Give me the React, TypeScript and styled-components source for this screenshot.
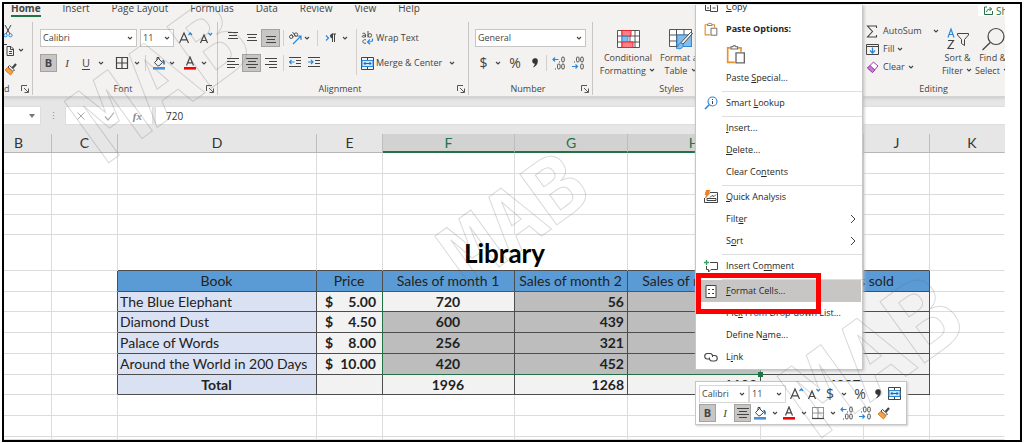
import React from "react";
import styled, { createGlobalStyle, css } from "styled-components";

const UI = `"Open Sans", "Noto Sans", sans-serif`;
const SHEET = `Lato, "Open Sans", sans-serif`;
const GREEN = "#217346";
const INK = "#444";
const BLUE = "#2b88d8";

const Global = createGlobalStyle`
  *, *::before, *::after { box-sizing: border-box; }
  body { margin: 0; background: #fff; }
  button, select, input { font: inherit; color: inherit; margin: 0; padding: 0; border: 0; background: none; }
`;

/* ---------- frame ---------- */

const Frame = styled.div`
  position: relative;
  margin: 2px;
  padding: 1px 15px 0 0;
  border: 2px solid #000;
  overflow: hidden;
  background: #fff;
  color: ${INK};
  font: 9px/12px ${UI};
`;

const Workbook = styled.main`
  overflow: hidden;
  background: #e6e6e6;
`;

/* ---------- ribbon ---------- */

const Ribbon = styled.header`
  background: #f3f2f1;
  border-bottom: 1px solid #d6d4d2;
  box-shadow: 0 1px 3px #c4c4c4;
  position: relative;
`;

const TabBar = styled.nav`
  display: flex;
  align-items: flex-end;
  gap: 22px;
  height: 12px;
  padding-left: 7px;
  overflow: hidden;
  font-size: 10px;
`;

const Tab = styled.a<{ $active?: boolean }>`
  flex: none;
  line-height: 14px;
  color: ${INK};
  text-decoration: none;
  font-weight: ${(p) => (p.$active ? 700 : 400)};
  border-bottom: 2px solid ${(p) => (p.$active ? GREEN : "transparent")};
`;

const Share = styled.button`
  flex: none;
  display: flex;
  align-items: center;
  align-self: flex-start;
  gap: 3px;
  width: 27px;
  height: 11px;
  padding-left: 6px;
  margin-left: auto;
  overflow: hidden;
  background: #fff;
  color: ${GREEN};
  line-height: 10px;

  > svg { flex: none; }
`;

const Groups = styled.div`
  display: flex;
  height: 79px;
  padding-top: 5px;
  overflow: hidden;
`;

const Group = styled.section<{ $w: number; $pad?: number; $last?: boolean }>`
  flex: none;
  display: flex;
  flex-direction: column;
  width: ${(p) => p.$w}px;
  padding-left: ${(p) => p.$pad ?? 0}px;
  margin-left: ${(p) => (p.$last ? "auto" : 0)};
  height: 73px;
  border-right: 1px solid ${(p) => (p.$last ? "transparent" : "#c8c6c4")};
`;

const GroupBody = styled.div<{ $top?: number }>`
  display: flex;
  height: 60px;
  padding-top: ${(p) => p.$top ?? 7}px;
`;

const GroupFoot = styled.div`
  display: flex;
  align-items: center;
  height: 13px;
  padding-right: 3px;
  white-space: nowrap;
`;

const GroupName = styled.span<{ $start?: boolean }>`
  flex: 1;
  text-align: ${(p) => (p.$start ? "left" : "center")};
`;

const Stack = styled.div<{ $tight?: boolean }>`
  display: flex;
  flex-direction: column;
  gap: ${(p) => (p.$tight ? 0 : 7)}px;
`;

const Row = styled.div<{ $h?: number }>`
  display: flex;
  align-items: center;
  height: ${(p) => p.$h ?? 18}px;
`;

const Tool = styled.button<{ $w?: number; $on?: boolean }>`
  flex: none;
  display: flex;
  align-items: center;
  justify-content: center;
  width: ${(p) => p.$w ?? 19}px;
  height: 18px;
  ${(p) =>
    p.$on &&
    css`
      background: #c8c6c4;
      outline: 1px solid #a5a3a1;
      outline-offset: -1px;
    `}
`;

const Letter = styled.span<{ $k?: "b" | "i" | "u" | "big" }>`
  font-size: ${(p) => (p.$k === "big" ? 14 : 11)}px;
  line-height: 16px;
  ${(p) => p.$k === "b" && "font-weight: 700;"}
  ${(p) => p.$k === "i" && `font-style: italic; font-family: "Liberation Serif", serif;`}
  ${(p) => p.$k === "u" && "text-decoration: underline; text-underline-offset: 2px;"}
`;

const Rule = styled.span<{ $m?: number; $tall?: boolean }>`
  flex: none;
  width: 1px;
  height: ${(p) => (p.$tall ? 46 : 16)}px;
  margin: 0 ${(p) => p.$m ?? 3}px;
  background: #d2d0ce;
`;

const TextTool = styled.button`
  display: flex;
  align-items: center;
  gap: 2px;
  height: 18px;
  white-space: nowrap;
`;

const Push = styled.span<{ $w: number }>`
  flex: none;
  width: ${(p) => p.$w}px;
`;

const BigTool = styled.button<{ $w: number }>`
  flex: none;
  display: flex;
  flex-direction: column;
  align-items: center;
  width: ${(p) => p.$w}px;
  padding-top: 4px;
  line-height: 13px;
  white-space: nowrap;
`;

const BigIcon = styled.span`
  flex: none;
  display: flex;
  align-items: center;
  height: 25px;
`;

const SelectWrap = styled.span<{ $w: number; $plain?: boolean }>`
  flex: none;
  display: grid;
  align-items: center;
  width: ${(p) => p.$w}px;
  height: 18px;
  border: 1px solid ${(p) => (p.$plain ? "#d8d8d8" : "#c8c6c4")};
  background: #fff;

  > * { grid-area: 1 / 1; }
  > svg { justify-self: end; margin-right: 2px; pointer-events: none; }
  > select { appearance: none; width: 100%; padding-left: 2px; outline: 0; }
`;

/* ---------- formula bar ---------- */

const FormulaBar = styled.div`
  display: flex;
  align-items: center;
  height: 19px;
  margin: 9px 0;
  color: #8a8a8a;
`;

const NameBox = styled.div`
  display: flex;
  align-items: center;
  justify-content: flex-end;
  width: 37px;
  height: 19px;
  padding-right: 5px;
  background: #fff;
  border: 1px solid #dedede;
  border-left: 0;
`;

const Dots = styled.span`
  width: 24px;
  text-align: center;
  line-height: 19px;
`;

const FormulaTools = styled.div`
  display: flex;
  align-items: center;
  justify-content: space-between;
  width: 88px;
  height: 19px;
  padding: 0 10px;
  background: #fff;
  border: 1px solid #dedede;
`;

const FormulaInput = styled.input`
  flex: 1;
  min-width: 0;
  height: 19px;
  margin-left: 2px;
  padding-left: 10px;
  background: #fff;
  border: 1px solid #dedede;
  border-right: 0;
  color: #333;
  font: 10px ${UI};
`;

/* ---------- sheet ---------- */

const Sheet = styled.table`
  width: 100%;
  table-layout: fixed;
  border-collapse: separate;
  border-spacing: 0;
  background: #fff;
  color: #222;
  font: 14px/16px ${SHEET};
`;

const ColHead = styled.th<{ $sel?: boolean }>`
  height: 19px;
  padding: 0;
  font-weight: 400;
  color: ${(p) => (p.$sel ? GREEN : "#333")};
  background: ${(p) => (p.$sel ? "#d2d2d2" : "#e6e6e6")};
  border-right: 1px solid #bdbdbd;
  border-bottom: ${(p) => (p.$sel ? `2px solid ${GREEN}` : "1px solid #b5b5b5")};
  &:first-child { padding-right: 18px; }
  &:last-child { padding-left: 10px; border-right-color: transparent; }
`;

const SheetRow = styled.tr<{ $h?: number }>`
  height: ${(p) => p.$h ?? 21}px;
  ${(p) => !p.$h && "&:nth-child(4n + 3) { height: 20px; }"}
`;

type CellProps = {
  $fill?: string;
  $align?: "left" | "center" | "right";
  $bold?: boolean;
  $right?: string;
  $bottom?: string;
};

const LINE = "#4d4d4d";
const GRID = "#dcdcdc";

const Cell = styled.td<CellProps>`
  position: relative;
  padding: 0 3px 0 2px;
  white-space: nowrap;
  text-align: ${(p) => p.$align ?? "left"};
  font-weight: ${(p) => (p.$bold ? 700 : 400)};
  background: ${(p) => p.$fill ?? "transparent"};
  border-right: 1px solid ${(p) => p.$right ?? GRID};
  border-bottom: 1px solid ${(p) => p.$bottom ?? GRID};
  &:last-child { border-right-color: transparent; }
`;

const Title = styled(Cell)`
  font-size: 26px;
  line-height: 30px;
  color: #000;
`;

const Money = styled.span`
  display: flex;
  justify-content: space-between;
  padding: 0 3px 0 6px;
`;

const Handle = styled.i`
  position: absolute;
  right: -3px;
  bottom: -3px;
  width: 5px;
  height: 5px;
  background: ${GREEN};
  z-index: 1;
`;

/* ---------- overlays ---------- */

const Menu = styled.ul`
  position: absolute;
  left: 691px;
  top: 1px;
  width: 168px;
  margin: 0;
  padding: 0 0 1px;
  list-style: none;
  background: #fff;
  border: 1px solid #c6c6c6;
  border-top: 0;
  box-shadow: 1px 1px 3px #bbb;
  overflow: hidden;
`;

const MenuItem = styled.button<{ $on?: boolean; $short?: boolean; $bold?: boolean }>`
  display: grid;
  grid-template-columns: 22px 1fr 16px;
  align-items: center;
  column-gap: 4px;
  width: calc(100% - 2px);
  height: 22px;
  margin: ${(p) => (p.$short ? "-9px" : 0)} 1px 0;
  padding-left: 3px;
  text-align: left;
  color: #262626;
  font-weight: ${(p) => (p.$bold ? 700 : 400)};
  background: ${(p) => (p.$on ? "#c8c6c4" : "transparent")};

  > svg { justify-self: center; }
`;

const Label = styled.span`
  white-space: nowrap;
`;

const PasteRow = styled.button`
  display: flex;
  align-items: center;
  height: 27px;
  padding-left: 30px;
`;

const MenuRule = styled.li`
  height: 3px;
  margin-left: 26px;
  border-bottom: 1px solid #dedede;
`;

const RedBox = styled.div`
  position: absolute;
  left: 692px;
  top: 269px;
  width: 125px;
  height: 41px;
  border: 5px solid #f00;
`;

const MiniBar = styled.div`
  position: absolute;
  left: 691px;
  top: 377px;
  width: 212px;
  padding: 2px 3px;
  background: #fff;
  border: 1px solid #c6c6c6;
  box-shadow: 1px 1px 2px #ccc;
`;

const Watermark = styled.div<{ $x: number; $y: number; $size: number }>`
  position: absolute;
  left: ${(p) => p.$x}px;
  top: ${(p) => p.$y}px;
  transform: translate(-50%, -50%) rotate(-36deg);
  font: 700 ${(p) => p.$size}px/1 "DejaVu Sans Mono", monospace;
  color: transparent;
  -webkit-text-stroke: 1px rgba(110, 110, 110, 0.26);
  pointer-events: none;
`;

/* ---------- icons ---------- */

const Svg = ({ w, h = w, children }: { w: number; h?: number; children: React.ReactNode }) => (
  <svg width={w} height={h} viewBox={`0 0 ${w} ${h}`} fill="none" stroke={INK} aria-hidden="true">
    {children}
  </svg>
);

const Chevron = () => (
  <Svg w={8}>
    <path d="M2 3l2 2 2-2" strokeWidth="1.1" />
  </Svg>
);

const Lines = ({ rows }: { rows: [number, number, number][] }) => (
  <Svg w={12} h={14}>
    {rows.map(([x, y, l]) => (
      <path key={y} d={`M${x} ${y}.5h${l}`} />
    ))}
  </Svg>
);
const top3: [number, number, number][] = [[1, 1, 10], [2, 4, 8], [1, 7, 10]];
const mid3: [number, number, number][] = [[1, 3, 10], [2, 6, 8], [1, 9, 10]];
const bot3: [number, number, number][] = [[1, 5, 10], [2, 8, 8], [1, 11, 10]];
const left4: [number, number, number][] = [[0, 2, 12], [0, 5, 8], [0, 8, 12], [0, 11, 8]];
const ctr4: [number, number, number][] = [[0, 2, 12], [2, 5, 8], [0, 8, 12], [2, 11, 8]];
const right4: [number, number, number][] = [[0, 2, 12], [4, 5, 8], [0, 8, 12], [4, 11, 8]];

const Launcher = () => (
  <Svg w={8}>
    <path d="M.5 6V.5H6M3 3l4 4M7.500 3.500v4h-4" strokeWidth=".9" />
  </Svg>
);

const Grow = ({ down }: { down?: boolean }) => (
  <Svg w={14} h={14}>
    <path d={down ? "M1.500 12L5 4l3.500 8M2.800 9.500h4.400" : "M.5 12L5 2l4.500 10M2.200 8.800h5.600"} strokeWidth="1.200" />
    <path d={down ? "M9.500 2l1.800 2L13 2" : "M9.500 4l1.800-2L13 4"} stroke={BLUE} strokeWidth="1.200" />
  </Svg>
);

const Borders = ({ dotted }: { dotted?: boolean }) => (
  <Svg w={14} h={14}>
    {dotted ? (
      <>
        <path d="M1 1.500h12M1.500 1v12M12.500 1v12M7 1v12M1 7h12" strokeWidth=".9" stroke="#888" />
        <path d="M1 12.500h12" strokeWidth="1.200" />
      </>
    ) : (
      <path d="M1 1.500h12M1 12.500h12M1.500 1v12M12.500 1v12M7 1v12M1 7h12" strokeWidth="1.200" />
    )}
  </Svg>
);

const Bucket = () => (
  <Svg w={14} h={14}>
    <path d="M2.500 6.500l4-4 4 4-3.500 3.300H5.500zM5 4V1.500h2V3" />
    <path d="M10.500 4.500c1.500.5 1.800 2 1.500 4" stroke="#1e5fa0" strokeWidth="1.400" />
    <path d="M1 12.300h12" stroke="#4a90d9" strokeWidth="2.600" />
  </Svg>
);

const FontColor = () => (
  <Svg w={14} h={14}>
    <path d="M3.500 9.500L7 1l3.500 8.500M4.700 6.800h4.600" strokeWidth="1.200" />
    <path d="M1 12.300h12" stroke="#f00" strokeWidth="2.600" />
  </Svg>
);

const Orient = () => (
  <Svg w={14} h={14}>
    <g strokeWidth=".9">
      <circle cx="3.200" cy="5.800" r="1.700" />
      <path d="M3.500 3.200l2 3" />
      <path d="M4.500 1l3.600 4.600" />
      <circle cx="8" cy="3.600" r="1.700" />
    </g>
    <path d="M5 13l7.500-7.500M9 5h4v4" stroke={BLUE} strokeWidth="1.200" />
  </Svg>
);

const Pilcrow = () => (
  <Svg w={12} h={12}>
    <path d="M1 3.500l2.500 2.500L1 8.500" stroke={BLUE} strokeWidth="1.200" />
    <path d="M7.500 10V2M9.500 10V2M11 2H7" />
    <path d="M7.500 2a2 2 0 000 4z" fill={INK} />
  </Svg>
);

const Wrap = () => (
  <Svg w={13} h={14}>
    <g strokeWidth=".9">
      <path d="M1.500 2.500c2-.8 3 0 3 1.200v2.500M4.500 4.200c-4-.2-4 2.200-2 2 1 0 2-.5 2-1.500" />
      <path d="M7 0v6.300" />
      <circle cx="8.800" cy="4.400" r="1.800" />
      <path d="M5 8.800c-4-1-4.500 4.200 0 3.500" />
    </g>
    <path d="M11.500 7.500c.5 3-1 3.500-4.500 3.500M9 8.500L6.500 11 9 13.300" stroke={BLUE} strokeWidth="1.200" />
  </Svg>
);

const Merge = () => (
  <Svg w={13} h={13}>
    <path d="M.5.5h12v12H.5z" />
    <path d="M6.500.5v3M6.500 9.500v3" />
    <path d="M1 3.500h11v6H1z" fill="#cfe6fa" stroke={BLUE} />
    <path d="M3 6.500h7M4.500 5L3 6.500 4.500 8M8.500 5L10 6.500 8.500 8" stroke="#0f6cbd" />
  </Svg>
);

const Indent = ({ more }: { more?: boolean }) => (
  <Svg w={12} h={12}>
    <path d="M0 .5h12M7 3.500h5M7 6.500h5M0 9.500h12" />
    <path d={more ? "M0 5h5M3 3l2 2-2 2" : "M.5 5h5M2.500 3l-2 2 2 2"} stroke={BLUE} strokeWidth="1.200" />
  </Svg>
);

const Oval = ({ x, y }: { x: number; y: number }) => (
  <rect x={x} y={y} width="2.600" height="5" rx="1.300" strokeWidth=".9" />
);
const Decimal = ({ less }: { less?: boolean }) => (
  <Svg w={14} h={14}>
    {less ? (
      <>
        <path d="M3 6h1" />
        <Oval x={5.5} y={1} />
        <Oval x={9.7} y={1} />
        <Oval x={9.7} y={8} />
        <path d="M1 10.500h5.500M4.500 8.500l2 2-2 2" stroke={BLUE} strokeWidth="1.200" />
      </>
    ) : (
      <>
        <path d="M7 6h1" />
        <Oval x={9.7} y={1} />
        <Oval x={5.5} y={8} />
        <Oval x={9.7} y={8} />
        <path d="M3 13h1" />
        <path d="M1 3.500h5.500M3 1.500l-2 2 2 2" stroke={BLUE} strokeWidth="1.200" />
      </>
    )}
  </Svg>
);

const Comma = () => (
  <Svg w={8} h={12}>
    <path d="M4 1.500a2.300 2.300 0 012.500 2.500c0 3-1.500 5-4 6 1-1.200 1.600-2.200 1.500-3.500A2.500 2.500 0 014 1.500z" fill="#333" stroke="#333" strokeWidth=".6" />
  </Svg>
);

const CondFormat = () => (
  <Svg w={23} h={20}>
    <path d="M.5 1.500h22v17H.5zM5 1v18M18 1v18M.5 7h22M.5 13h22M13 1v18" strokeWidth=".9" fill="#fff" />
    <path d="M5 1.500h9V7H5zM5 13h11v5.500H5z" fill="#ff8087" stroke="#e8262f" />
    <path d="M5 7.500h6v5H5z" fill="#83bdec" stroke="#2b88d8" strokeWidth=".8" />
  </Svg>
);

const FormatTable = () => (
  <Svg w={24} h={22}>
    <path d="M.5 1.500h22v17H.5zM7.500 1v18M15 1v18M.5 7h22M.5 13h22" strokeWidth=".9" fill="#fff" />
    <path d="M8 7h14.500v11.500H8z" fill="#83bdec" stroke={BLUE} />
    <path d="M23.500 5.500L14 16l-2-1.500L21.500 4.500z" fill="#fff" />
    <path d="M12 15c-3 0-2 4-5 5 4 2 8 0 7-4z" fill="#83bdec" stroke={BLUE} />
  </Svg>
);

const Sigma = () => (
  <Svg w={12} h={13}>
    <path d="M10.500 3V1H1.500l5 5.500-5 5.500h9v-2" strokeWidth="1.100" />
  </Svg>
);

const FillDown = () => (
  <Svg w={13} h={13}>
    <path d="M.5 1.500h12v10H.5zM.5 3.500h12" />
    <path d="M6.500 4.500V10M4 7.500L6.500 10 9 7.500" stroke={BLUE} strokeWidth="1.300" />
  </Svg>
);

const Eraser = () => (
  <Svg w={13} h={13}>
    <path d="M7.500 1l4.500 4-5.500 6.500L1.500 7z" stroke="#a23bb0" fill="#fff" />
    <path d="M4 4.500l5 4.500-2.500 2.500L1.500 7z" fill="#c77dd1" stroke="#a23bb0" />
  </Svg>
);

const SortFilter = () => (
  <Svg w={24} h={24}>
    <path d="M2 10.500L5 2l3 8.500M3 7.500h4" stroke={BLUE} strokeWidth="1.200" />
    <path d="M2 13.500h5.500L2 21.500h6" strokeWidth="1.200" />
    <path d="M11.500 6.500h11v1.500l-4 4.500v6l-3-2v-4l-4-4.500z" />
  </Svg>
);

const Lens = () => (
  <Svg w={24} h={24}>
    <circle cx="15" cy="9.500" r="8" strokeWidth="1.200" />
    <path d="M9.200 15.500L1.500 23" strokeWidth="1.300" />
  </Svg>
);

const Brush = () => (
  <Svg w={13} h={14}>
    <path d="M12 2L8.500 6" strokeWidth="2.200" />
    <path d="M5.500 3.500l5 4.500-1.500 1.500-5-4.500z" fill="#fff" />
    <path d="M3.500 5.500L9 10l-2.500 3L1 8z" fill="#f5a04c" stroke="#e07f1c" />
  </Svg>
);

const Scissors = () => (
  <Svg w={10} h={14}>
    <path d="M1 1l5 9M7 1L2 10" />
    <circle cx="1.500" cy="11.300" r="1.600" stroke={BLUE} />
    <circle cx="6.500" cy="11.300" r="1.600" stroke={BLUE} />
  </Svg>
);

const Pages = () => (
  <Svg w={10} h={14}>
    <path d="M0 1.500h3M3 3.500h4l2.500 2.500v6.500H3zM6.500 4v2.500H9M5 8.500h3M5 10.500h3" />
  </Svg>
);

const CopyIcon = () => (
  <Svg w={13} h={12}>
    <path d="M.5.5h5v9h-5zM5.500 2.500h4l3 2v6h-7zM2 7h2M7.500 7h3" />
  </Svg>
);

const Clip = ({ size }: { size: number }) => (
  <svg width={size} height={size} viewBox="0 0 18 18" fill="none" stroke="#e8912d" strokeWidth="1.500" aria-hidden="true">
    <path d="M8 16.500H1.500v-13H4M11 3.500h2.500V7" />
    <path d="M4.500 4.500v-2H6a1.600 1.600 0 013 0h1.500v2z" stroke="#666" strokeWidth="1" />
    <path d="M9 8h7.500v9H9z" stroke="#666" strokeWidth="1.200" fill="#fff" />
  </svg>
);

const Lookup = () => (
  <Svg w={14} h={14}>
    <circle cx="8.500" cy="5.500" r="4.500" stroke={BLUE} strokeWidth="1.100" />
    <path d="M5 9l-4 4" stroke={BLUE} strokeWidth="1.600" />
    <path d="M8.500 5v3M8.500 3v1" />
  </Svg>
);

const Quick = () => (
  <Svg w={14} h={14}>
    <path d="M6 2.500h7.500v10h-13V8M3 10.500h9V8.500H3z" />
    <path d="M6 7.500l2-2 2 1 2-2" />
    <path d="M2.500 0h3.500L4.500 3H6L1.500 8l1-3.500H1z" fill="#f08020" stroke="#e06c10" strokeWidth=".6" />
  </Svg>
);

const CommentIcon = () => (
  <Svg w={14} h={13}>
    <path d="M6 2.500h7.500v7H7L4.500 12V9.500h-2V6" />
    <path d="M2.500 0v5M0 2.500h5" stroke="#36a05c" strokeWidth="1.300" />
  </Svg>
);

const FormatIcon = () => (
  <Svg w={12} h={13}>
    <path d="M1 .5h10v12H1z" fill="#fff" />
    <path d="M3 4.500h2M7 4.500h2M3 8.500h2M7 8.500h2" />
  </Svg>
);

const LinkIcon = () => (
  <Svg w={14} h={10}>
    <path d="M6 7H3.500a2.700 2.700 0 010-5.500H6A2.700 2.700 0 018.500 5" strokeWidth="1.100" />
    <path d="M8 3.500h2.500a2.700 2.700 0 010 5.500H8A2.700 2.700 0 015.500 5.500" strokeWidth="1.100" />
  </Svg>
);

const Arrow = () => (
  <Svg w={8} h={10}>
    <path d="M2 1l4 4-4 4" />
  </Svg>
);

const Drop = ({ name, w = 8 }: { name: string; w?: number }) => (
  <Tool $w={w} aria-label={`${name} options`}>
    <Chevron />
  </Tool>
);

const Picker = ({ label, value, w, plain }: { label: string; value: string; w: number; plain?: boolean }) => (
  <SelectWrap $w={w} $plain={plain}>
    <select aria-label={label} defaultValue={value}>
      <option>{value}</option>
    </select>
    <Chevron />
  </SelectWrap>
);

const Foot = ({ children, launcher = true, start }: { children: React.ReactNode; launcher?: boolean; start?: boolean }) => (
  <GroupFoot>
    <GroupName $start={start}>{children}</GroupName>
    {launcher && <Launcher />}
  </GroupFoot>
);

/* ---------- menu ---------- */

type Entry = { label: string; key?: number; icon?: React.ReactNode; on?: boolean; sub?: boolean; bold?: boolean; short?: boolean };
const MENU: (Entry | "rule" | "paste")[] = [
  { label: "Copy", key: 0, icon: <CopyIcon />, short: true },
  { label: "Paste Options:", icon: <Clip size={14} />, bold: true },
  "paste",
  { label: "Paste Special...", key: 6 },
  "rule",
  { label: "Smart Lookup", key: 6, icon: <Lookup /> },
  "rule",
  { label: "Insert...", key: 0 },
  { label: "Delete...", key: 0 },
  { label: "Clear Contents", key: 8 },
  "rule",
  { label: "Quick Analysis", key: 0, icon: <Quick /> },
  { label: "Filter", key: 4, sub: true },
  { label: "Sort", key: 1, sub: true },
  "rule",
  { label: "Insert Comment", key: 9, icon: <CommentIcon /> },
  "rule",
  { label: "Format Cells...", key: 0, icon: <FormatIcon />, on: true },
  { label: "Pick From Drop-down List...", key: 3 },
  { label: "Define Name...", key: 8 },
  { label: "Link", key: 1, icon: <LinkIcon /> },
];

const Keyed = ({ label, at }: { label: string; at?: number }) =>
  at === undefined ? (
    <Label>{label}</Label>
  ) : (
    <Label>
      {label.slice(0, at)}
      <u>{label[at]}</u>
      {label.slice(at + 1)}
    </Label>
  );

const ContextMenu = () => (
  <Menu>
    {MENU.map((m, i) =>
      m === "rule" ? (
        <MenuRule key={i} role="separator" />
      ) : m === "paste" ? (
        <li key={i}>
          <PasteRow aria-label="Paste">
            <Clip size={20} />
          </PasteRow>
        </li>
      ) : (
        <li key={i}>
          <MenuItem $on={m.on} $short={m.short} $bold={m.bold}>
            {m.icon ?? <i />}
            <Keyed label={m.label} at={m.key} />
            {m.sub && <Arrow />}
          </MenuItem>
        </li>
      )
    )}
  </Menu>
);

const MiniToolbar = () => (
  <MiniBar role="toolbar" aria-label="Formatting">
    <Row $h={19}>
      <Picker label="Mini font" value="Calibri" w={50} plain />
      <Picker label="Mini font size" value="11" w={37} plain />
      <Push $w={2} />
      <Tool $w={17} aria-label="Increase font size"><Grow /></Tool>
      <Tool $w={17} aria-label="Decrease font size"><Grow down /></Tool>
      <Tool $w={16} aria-label="Currency"><Letter $k="big">$</Letter></Tool>
      <Drop name="Currency" w={12} />
      <Tool $w={20} aria-label="Percent"><Letter $k="big">%</Letter></Tool>
      <Tool $w={16} aria-label="Comma style"><Comma /></Tool>
      <Tool $w={16} aria-label="Merge"><Merge /></Tool>
    </Row>
    <Row $h={19}>
      <Tool $w={17} $on aria-label="Bold"><Letter $k="b">B</Letter></Tool>
      <Tool $w={18} aria-label="Italic"><Letter $k="i">I</Letter></Tool>
      <Tool $w={17} $on aria-label="Center"><Lines rows={ctr4} /></Tool>
      <Tool $w={18} aria-label="Fill color"><Bucket /></Tool>
      <Drop name="Fill" w={11} />
      <Tool $w={18} aria-label="Font color"><FontColor /></Tool>
      <Drop name="Color" w={11} />
      <Tool $w={18} aria-label="Borders"><Borders dotted /></Tool>
      <Drop name="Borders" w={11} />
      <Tool $w={18} aria-label="Increase decimal"><Decimal /></Tool>
      <Tool $w={18} aria-label="Decrease decimal"><Decimal less /></Tool>
      <Tool $w={18} aria-label="Format painter"><Brush /></Tool>
    </Row>
  </MiniBar>
);

/* ---------- sheet data ---------- */

const COLS: [string, number | undefined][] = [
  ["B", 48], ["C", 66], ["D", 199], ["E", 66], ["F", 132], ["G", 113], ["H", 133], ["I", 103], ["J", 66], ["K", undefined],
];
const BOOKS = [
  { name: "The Blue Elephant", price: "5.00", m1: 720, m2: 56 },
  { name: "Diamond Dust", price: "4.50", m1: 600, m2: 439 },
  { name: "Palace of Words", price: "8.00", m1: 256, m2: 321 },
  { name: "Around the World in 200 Days", price: "10.00", m1: 420, m2: 452 },
];
const HEAD = "#5b9bd5";
const NAME = "#d9e1f2";
const SOFT = "#f2f2f2";
const PICKED = "#bdbdbd";

const Blank = ({ n }: { n: number }) => (
  <>
    {Array.from({ length: n }, (_, i) => (
      <Cell key={i} />
    ))}
  </>
);

const SheetTable = () => (
  <Sheet>
    <colgroup>
      {COLS.map(([c, w]) => (
        <col key={c} width={w} />
      ))}
    </colgroup>
    <thead>
      <tr>
        {COLS.map(([c]) => (
          <ColHead key={c} scope="col" $sel={"FGH".includes(c)}>{c}</ColHead>
        ))}
      </tr>
    </thead>
    <tbody>
      <SheetRow><Blank n={10} /></SheetRow>
      <SheetRow><Blank n={10} /></SheetRow>
      <SheetRow><Blank n={10} /></SheetRow>
      <SheetRow $h={20}><Blank n={10} /></SheetRow>
      <SheetRow $h={36}>
        <Blank n={2} />
        <Cell $bottom={LINE} />
        <Cell $bottom={LINE} />
        <Title colSpan={2} $align="center" $bold $bottom={LINE}>Library</Title>
        <Cell $bottom={LINE} />
        <Cell $bottom={LINE} />
        <Cell $bottom={LINE} />
        <Cell />
      </SheetRow>
      <SheetRow>
        <Cell />
        <Cell $right={LINE} />
        <Cell $fill={HEAD} $align="center" $right={LINE} $bottom={LINE}>Book</Cell>
        <Cell $fill={HEAD} $align="center" $right={LINE} $bottom={LINE}>Price</Cell>
        <Cell $fill={HEAD} $align="center" $right={LINE} $bottom={GREEN}>Sales of month 1</Cell>
        <Cell $fill={HEAD} $align="center" $right={LINE} $bottom={GREEN}>Sales of month 2</Cell>
        <Cell $fill={HEAD} $align="center" $right={LINE} $bottom={GREEN}>Sales of month 3</Cell>
        <Cell colSpan={2} $fill={HEAD} $align="center" $right={LINE} $bottom={LINE}>Total books sold</Cell>
        <Cell />
      </SheetRow>
      {BOOKS.map((b, i) => {
        const last = i === BOOKS.length - 1;
        const edge = last ? GREEN : LINE;
        return (
          <SheetRow key={b.name}>
            <Cell />
            <Cell $right={LINE} />
            <Cell $fill={NAME} $right={LINE} $bottom={LINE}>{b.name}</Cell>
            <Cell $fill={SOFT} $bold $right={GREEN} $bottom={LINE}>
              <Money><span>$</span><span>{b.price}</span></Money>
            </Cell>
            <Cell $fill={i ? PICKED : SOFT} $bold $align="center" $right={LINE} $bottom={edge}>{b.m1}</Cell>
            <Cell $fill={PICKED} $bold $align="right" $right={LINE} $bottom={edge}>{b.m2}</Cell>
            <Cell $fill={PICKED} $right={GREEN} $bottom={edge}>{last && <Handle />}</Cell>
            <Cell colSpan={2} $fill={SOFT} $right={LINE} $bottom={LINE} />
            <Cell />
          </SheetRow>
        );
      })}
      <SheetRow>
        <Cell />
        <Cell $right={LINE} />
        <Cell $fill={NAME} $bold $align="center" $right={LINE} $bottom={LINE}>Total</Cell>
        <Cell $fill={SOFT} $right={LINE} $bottom={LINE} />
        <Cell $fill={SOFT} $bold $align="center" $right={LINE} $bottom={LINE}>1996</Cell>
        <Cell $fill={SOFT} $bold $align="right" $right={LINE} $bottom={LINE}>1268</Cell>
        <Cell $fill={SOFT} $bold $align="right" $right={LINE} $bottom={LINE}>1133</Cell>
        <Cell colSpan={2} $fill={SOFT} $bold $align="center" $right={LINE} $bottom={LINE}>4397</Cell>
        <Cell />
      </SheetRow>
      <SheetRow><Blank n={10} /></SheetRow>
      <SheetRow><Blank n={10} /></SheetRow>
      <SheetRow $h={3}><Blank n={10} /></SheetRow>
    </tbody>
  </Sheet>
);

const TABS = ["Home", "Insert", "Page Layout", "Formulas", "Data", "Review", "View", "Help"];

export default function App() {
  return (
    <Frame>
      <Global />
      <Workbook>
        <Ribbon>
          <TabBar>
            {TABS.map((t, i) => (
              <Tab key={t} href="#" $active={i === 0}>{t}</Tab>
            ))}
            <Share>
              <svg width="9" height="9" viewBox="0 0 9 9" fill="none" stroke={GREEN} aria-hidden="true">
                <path d="M3 1H.5v7.500h8V5M2.500 6c.5-2.500 2-3 5-3M5.500 1l2 2-2 2" />
              </svg>
              Share
            </Share>
          </TabBar>
          <Groups>
            <Group $w={29}>
              <GroupBody $top={0}>
                <Stack $tight>
                  <Row><Scissors /></Row>
                  <Row $h={20}><Pages /><Drop name="Copy" w={14} /></Row>
                  <Row><Brush /></Row>
                </Stack>
              </GroupBody>
              <Foot start>d</Foot>
            </Group>

            <Group $w={185} $pad={7}>
              <GroupBody>
                <Stack>
                  <Row>
                    <Picker label="Font" value="Calibri" w={97} />
                    <Push $w={3} />
                    <Picker label="Font size" value="11" w={34} />
                    <Push $w={2} />
                    <Tool $w={20} aria-label="Increase font size"><Grow /></Tool>
                    <Tool $w={20} aria-label="Decrease font size"><Grow down /></Tool>
                  </Row>
                  <Row>
                    <Tool $w={17} $on aria-label="Bold"><Letter $k="b">B</Letter></Tool>
                    <Tool $w={20} aria-label="Italic"><Letter $k="i">I</Letter></Tool>
                    <Tool $w={18} aria-label="Underline"><Letter $k="u">U</Letter></Tool>
                    <Drop name="Underline" w={12} />
                    <Push $w={4} />
                    <Tool $w={22} aria-label="Borders"><Borders /></Tool>
                    <Drop name="Borders" />
                    <Rule $m={4} />
                    <Tool $w={18} aria-label="Fill color"><Bucket /></Tool>
                    <Drop name="Fill" />
                    <Push $w={4} />
                    <Tool $w={20} aria-label="Font color"><FontColor /></Tool>
                    <Drop name="Color" />
                  </Row>
                </Stack>
              </GroupBody>
              <Foot>Font</Foot>
            </Group>

            <Group $w={251} $pad={5}>
              <GroupBody>
                <Stack>
                  <Row>
                    <Tool aria-label="Top align"><Lines rows={top3} /></Tool>
                    <Tool aria-label="Middle align"><Lines rows={mid3} /></Tool>
                    <Tool $on aria-label="Bottom align"><Lines rows={bot3} /></Tool>
                    <Rule />
                    <Tool $w={16} aria-label="Orientation"><Orient /></Tool>
                    <Drop name="Orientation" />
                    <Rule $m={6} />
                    <Tool $w={14} aria-label="Text direction"><Pilcrow /></Tool>
                    <Drop name="Direction" w={14} />
                  </Row>
                  <Row>
                    <Tool aria-label="Align left"><Lines rows={left4} /></Tool>
                    <Tool $on aria-label="Center"><Lines rows={ctr4} /></Tool>
                    <Tool aria-label="Align right"><Lines rows={right4} /></Tool>
                    <Rule />
                    <Tool $w={16} aria-label="Decrease indent"><Indent /></Tool>
                    <Tool $w={22} aria-label="Increase indent"><Indent more /></Tool>
                  </Row>
                </Stack>
                <Rule $tall $m={4} />
                <Stack>
                  <TextTool><Wrap />Wrap Text</TextTool>
                  <TextTool><Merge />Merge &amp; Center<Push $w={2} /><Chevron /></TextTool>
                </Stack>
              </GroupBody>
              <Foot>Alignment</Foot>
            </Group>

            <Group $w={124} $pad={6}>
              <GroupBody>
                <Stack>
                  <Row><Picker label="Number format" value="General" w={111} /></Row>
                  <Row>
                    <Tool $w={17} aria-label="Currency"><Letter $k="big">$</Letter></Tool>
                    <Drop name="Currency" w={12} />
                    <Tool $w={22} aria-label="Percent"><Letter $k="big">%</Letter></Tool>
                    <Tool $w={17} aria-label="Comma style"><Comma /></Tool>
                    <Rule />
                    <Tool $w={18} aria-label="Increase decimal"><Decimal /></Tool>
                    <Tool aria-label="Decrease decimal"><Decimal less /></Tool>
                  </Row>
                </Stack>
              </GroupBody>
              <Foot>Number</Foot>
            </Group>

            <Group $w={155} $pad={6}>
              <GroupBody $top={0}>
                <BigTool $w={58}>
                  <BigIcon><CondFormat /></BigIcon>
                  <span>Conditional</span>
                  <span>Formatting <Chevron /></span>
                </BigTool>
                <BigTool $w={48}>
                  <BigIcon><FormatTable /></BigIcon>
                  <span>Format as</span>
                  <span>Table <Chevron /></span>
                </BigTool>
              </GroupBody>
              <Foot launcher={false}>Styles</Foot>
            </Group>

            <Group $w={140} $pad={1} $last>
              <GroupBody $top={0}>
                <Stack $tight>
                  <TextTool><Sigma /><Push $w={1} />AutoSum<Push $w={6} /><Chevron /></TextTool>
                  <TextTool><FillDown /><Push $w={0} />Fill<Chevron /></TextTool>
                  <TextTool><Eraser /><Push $w={0} />Clear<Chevron /></TextTool>
                </Stack>
                <BigTool $w={36}>
                  <BigIcon><SortFilter /></BigIcon>
                  <span>Sort &amp;</span>
                  <span>Filter <Chevron /></span>
                </BigTool>
                <BigTool $w={34}>
                  <BigIcon><Lens /></BigIcon>
                  <span>Find &amp;</span>
                  <span>Select <Chevron /></span>
                </BigTool>
              </GroupBody>
              <Foot launcher={false}>Editing</Foot>
            </Group>
          </Groups>
        </Ribbon>

        <FormulaBar>
          <NameBox>
            <svg width="6" height="4" viewBox="0 0 6 4" aria-hidden="true"><path d="M0 0h6L3 4z" fill="#777" /></svg>
          </NameBox>
          <Dots>⋮</Dots>
          <FormulaTools>
            <Svg w={10}><path d="M1.500 1.500l7 7M8.500 1.500l-7 7" stroke="#aaa" /></Svg>
            <Svg w={11} h={10}><path d="M1 5.500L4 9l6-7.500" stroke="#aaa" strokeWidth="1.200" /></Svg>
            <Letter $k="i"><b>fx</b></Letter>
          </FormulaTools>
          <FormulaInput aria-label="Formula" defaultValue="720" />
        </FormulaBar>

        <SheetTable />
      </Workbook>

      <ContextMenu />
      <RedBox />
      <MiniToolbar />
      <Watermark $x={156} $y={77} $size={104}>MAB</Watermark>
      <Watermark $x={510} $y={215} $size={86}>MAB</Watermark>
      <Watermark $x={869} $y={352} $size={104}>MAB</Watermark>
    </Frame>
  );
}
